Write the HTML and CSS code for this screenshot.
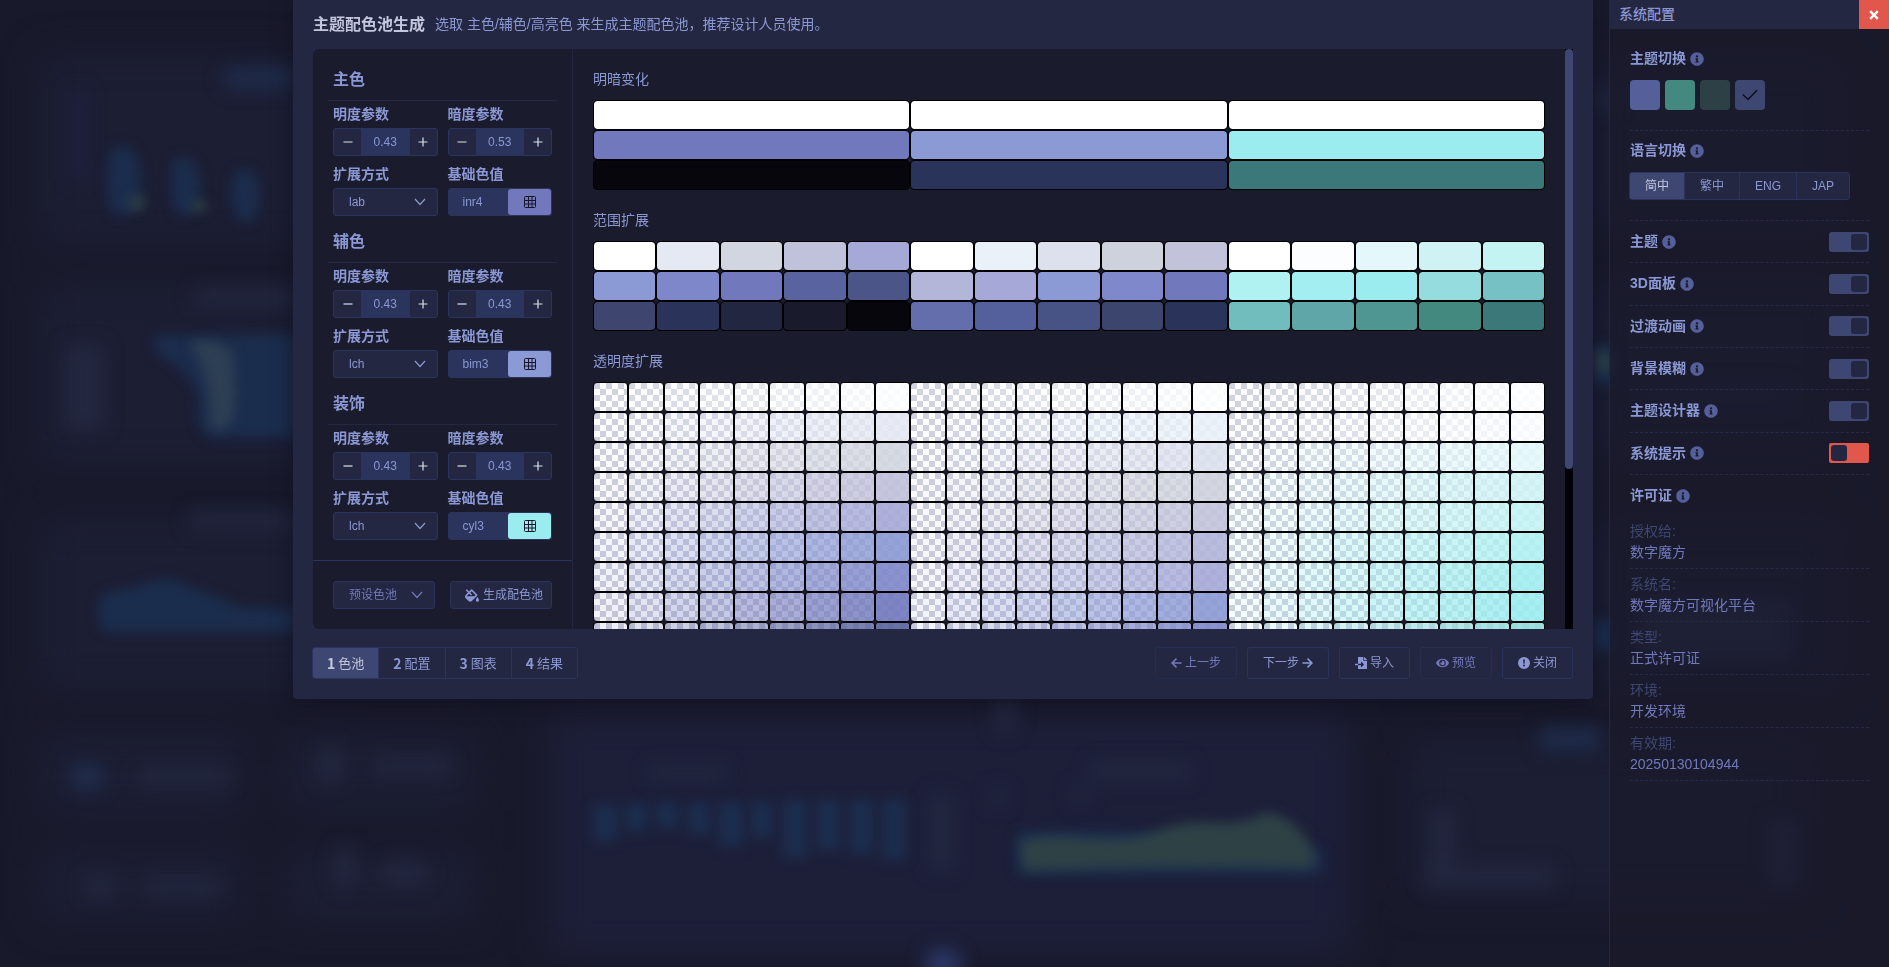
FILE: index.html
```html
<!DOCTYPE html>
<html lang="zh-CN">
<head>
<meta charset="utf-8">
<title>主题配色池生成</title>
<link rel="stylesheet" href="styles.css">
</head>
<body>

<svg class="sprite" aria-hidden="true">
  <symbol id="i-down" viewBox="0 0 12 12"><path d="M1 3l5 5.5L11 3" fill="none" stroke="currentColor" stroke-width="1.2"/></symbol>
  <symbol id="i-minus" viewBox="0 0 10 10"><path d="M.5 5h9" fill="none" stroke="currentColor" stroke-width="1.2"/></symbol>
  <symbol id="i-plus" viewBox="0 0 10 10"><path d="M.5 5h9M5 .5v9" fill="none" stroke="currentColor" stroke-width="1.2"/></symbol>
  <symbol id="i-grid" viewBox="0 0 12 12"><path d="M1.5.5h9a1 1 0 0 1 1 1v9a1 1 0 0 1-1 1h-9a1 1 0 0 1-1-1v-9a1 1 0 0 1 1-1zM.5 4.500h11M.5 8h11M4.500.5v11M8 .5v11" fill="none" stroke="currentColor"/></symbol>
  <symbol id="i-fill" viewBox="0 0 576 512"><path fill="currentColor" d="M512 320s-64 92.650-64 128c0 35.350 28.660 64 64 64s64-28.650 64-64-64-128-64-128zm-9.370-102.940L294.940 9.370C288.690 3.120 280.500 0 272.310 0s-16.380 3.120-22.620 9.370l-81.580 81.580L81.930 4.760c-6.250-6.250-16.380-6.250-22.620 0L36.690 27.380c-6.240 6.250-6.240 16.380 0 22.620l86.190 86.180-94.760 94.760c-37.490 37.480-37.490 98.260 0 135.750l117.190 117.190c18.740 18.740 43.310 28.120 67.870 28.120 24.570 0 49.130-9.370 67.870-28.120l221.570-221.570c12.500-12.500 12.500-32.750.01-45.250zm-116.220 70.970H65.930c1.360-3.840 3.570-7.980 7.430-11.830l13.150-13.150 81.610-81.610 58.600 58.600c12.490 12.490 32.750 12.490 45.240 0s12.490-32.750 0-45.240l-58.600-58.600 58.950-58.950 162.440 162.440-48.340 48.340z"/></symbol>
  <symbol id="i-left" viewBox="0 0 12 12"><path d="M11.500 6H1.500M6 1.200L1.200 6 6 10.800" fill="none" stroke="currentColor" stroke-width="1.700"/></symbol>
  <symbol id="i-right" viewBox="0 0 12 12"><path d="M.5 6h10M6 1.200L10.800 6 6 10.800" fill="none" stroke="currentColor" stroke-width="1.700"/></symbol>
  <symbol id="i-import" viewBox="0 0 512 512"><path fill="currentColor" d="M16 288c-8.800 0-16 7.200-16 16v32c0 8.800 7.200 16 16 16h112v-64zm489-183L407.100 7c-4.500-4.500-10.600-7-17-7H384v128h128v-6.100c0-6.300-2.500-12.400-7-16.900zm-153 31V0H152c-13.300 0-24 10.700-24 24v264h128v-65.200c0-14.300 17.300-21.400 27.400-11.300L379 308c6.600 6.700 6.600 17.400 0 24l-95.700 96.400c-10.100 10.100-27.400 3-27.400-11.300V352H128v136c0 13.300 10.700 24 24 24h336c13.300 0 24-10.700 24-24V160H376c-13.200 0-24-10.800-24-24z"/></symbol>
  <symbol id="i-eye" viewBox="0 0 576 512"><path fill="currentColor" d="M572.520 241.400C518.290 135.590 410.930 64 288 64S57.680 135.640 3.480 241.410a32.350 32.350 0 0 0 0 29.190C57.710 376.410 165.070 448 288 448s230.320-71.640 284.520-177.410a32.350 32.350 0 0 0 0-29.190zM288 400a144 144 0 1 1 144-144 143.930 143.930 0 0 1-144 144zm0-240a95.310 95.310 0 0 0-25.310 3.790 47.850 47.850 0 0 1-66.900 66.900A95.780 95.780 0 1 0 288 160z"/></symbol>
  <symbol id="i-alert" viewBox="0 0 12 12"><path fill="currentColor" fill-rule="evenodd" d="M6 0a6 6 0 1 1 0 12A6 6 0 0 1 6 0zM5.100 2.500l.3 4.200h1.200l.3-4.200zM6 7.600a1 1 0 1 0 0 2 1 1 0 0 0 0-2z"/></symbol>
  <symbol id="i-info" viewBox="0 0 512 512"><path fill="currentColor" d="M256 8C119.043 8 8 119.083 8 256c0 136.997 111.043 248 248 248s248-111.003 248-248C504 119.083 392.957 8 256 8zm0 110c23.196 0 42 18.804 42 42s-18.804 42-42 42-42-18.804-42-42 18.804-42 42-42zm56 254c0 6.627-5.373 12-12 12h-88c-6.627 0-12-5.373-12-12v-24c0-6.627 5.373-12 12-12h12v-64h-12c-6.627 0-12-5.373-12-12v-24c0-6.627 5.373-12 12-12h64c6.627 0 12 5.373 12 12v100h12c6.627 0 12 5.373 12 12v24z"/></symbol>
  <symbol id="i-check" viewBox="0 0 16 12"><path d="M.8 5.500L6 10.500 15.200 1" fill="none" stroke="currentColor" stroke-width="1.400"/></symbol>
  <symbol id="i-close" viewBox="0 0 10 10"><path d="M1.200 1.200l7.600 7.600M8.800 1.200L1.200 8.800" fill="none" stroke="currentColor" stroke-width="2.400"/></symbol>
</svg>

<svg class="backdrop" viewBox="0 0 1889 967" preserveAspectRatio="none" aria-hidden="true">
  <defs>
    <filter id="b-lg" x="-50%" y="-50%" width="200%" height="200%" color-interpolation-filters="sRGB"><feGaussianBlur stdDeviation="18"/></filter>
    <filter id="b-md" x="-50%" y="-100%" width="200%" height="300%" color-interpolation-filters="sRGB"><feGaussianBlur stdDeviation="9"/></filter>
    <filter id="b-sm" x="-50%" y="-50%" width="200%" height="200%" color-interpolation-filters="sRGB"><feGaussianBlur stdDeviation="6"/></filter>
  </defs>
  <g filter="url(#b-lg)" fill="#1c1e34">
    <rect x="40" y="55" width="300" height="190"/>
    <rect x="40" y="285" width="300" height="180"/>
    <rect x="40" y="520" width="300" height="170"/>
    <rect x="40" y="735" width="205" height="80"/>
    <rect x="40" y="850" width="205" height="70"/>
    <rect x="285" y="735" width="190" height="75"/>
    <rect x="285" y="850" width="190" height="70"/>
    <rect x="550" y="715" width="800" height="240" fill="#1d1f39"/>
    <rect x="1410" y="740" width="400" height="160"/>
    <rect x="1590" y="60" width="250" height="170"/>
    <rect x="1590" y="280" width="250" height="180"/>
    <rect x="1590" y="520" width="250" height="170"/>
  </g>
  <g filter="url(#b-md)" fill="#23273f">
    <rect x="225" y="68" width="70" height="20" fill="#1f2d4c"/>
    <rect x="195" y="288" width="100" height="18"/>
    <rect x="190" y="512" width="105" height="18"/>
    <rect x="65" y="345" width="38" height="85"/>
    <rect x="70" y="90" width="16" height="90" fill="#1f203d"/>
    <ellipse cx="87" cy="777" rx="18" ry="14" fill="#1f2d4c"/>
    <rect x="140" y="768" width="90" height="18"/>
    <rect x="85" y="876" width="30" height="22"/>
    <rect x="145" y="878" width="75" height="18"/>
    <ellipse cx="330" cy="765" rx="14" ry="20"/>
    <rect x="375" y="757" width="75" height="18"/>
    <ellipse cx="345" cy="868" rx="12" ry="22"/>
    <ellipse cx="404" cy="873" rx="26" ry="13"/>
    <rect x="650" y="765" width="75" height="16"/>
    <rect x="1090" y="762" width="100" height="18"/>
    <rect x="1540" y="728" width="60" height="22" fill="#1f2d4c"/>
    <ellipse cx="1005" cy="714" rx="12" ry="20"/>
    <ellipse cx="943" cy="964" rx="20" ry="16" fill="#2b3765"/>
    <rect x="930" y="795" width="22" height="75"/>
    <rect x="1425" y="866" width="130" height="22"/>
    <rect x="1430" y="810" width="24" height="60"/>
    <ellipse cx="998" cy="797" rx="9" ry="9"/>
    <ellipse cx="1080" cy="795" rx="9" ry="9"/>
    <rect x="1770" y="820" width="26" height="66" fill="#2b3050"/>
    <rect x="1640" y="600" width="150" height="60" fill="#282f50"/>
    <rect x="1640" y="385" width="150" height="20" fill="#20243f"/>
    <rect x="1595" y="90" width="20" height="20"/>
  </g>
  <g filter="url(#b-sm)" fill="#1b2d4d">
    <path d="M112 150q14-8 24 6q10 25 0 50q-10 16-24 6q-10-30 0-62zM174 160q14-6 22 6q8 24 0 42q-10 14-20 4q-8-28-2-52zM236 172q14-6 20 6q6 24-2 40q-10 8-18-2q-8-22 0-44z"/>
    <path d="M155 336l140-2v104h-84q-18-10-12-36q-4-30-44-50z"/>
    <path d="M103 594q30-6 62-16q40 14 76 30l54 2v22H105q-12-18-2-38z"/>
    <path d="M593 805h24v36h-24zM625 803h22v28h-22zM656 802h22v26h-22zM688 802h22v32h-22zM719 802h24v44h-24zM751 802h22v36h-22zM783 800h24v58h-24zM816 800h24v50h-24zM849 800h24v54h-24zM882 800h24v60h-24z"/>
    <path d="M1017 832l80-2 170 10 56 10v24H1017z"/>
    <path d="M1592 345h20v40h-20zM1592 620h20v30h-20z"/>
  </g>
  <g filter="url(#b-sm)" fill="#2e4246">
    <ellipse cx="137" cy="203" rx="9" ry="7"/>
    <ellipse cx="199" cy="206" rx="8" ry="6"/>
    <path fill="#2d3f53" d="M190 342q30-4 42 10q6 45 0 70q-12 12-22 4q2-50-20-84z"/>
    <path d="M1020 842q25-8 60-4q40 6 76-6q20-10 50-10q40 4 60-10q26 4 44 32q8 24-2 24q-100-4-284 2z"/>
    <ellipse cx="1603" cy="362" rx="8" ry="12"/>
  </g>
</svg>

<main class="dialog" role="dialog" aria-labelledby="dialog-title">
  <header class="dialog-head">
    <h1 id="dialog-title">主题配色池生成</h1>
    <p>选取 主色/辅色/高亮色 来生成主题配色池，推荐设计人员使用。</p>
  </header>

  <div class="workspace">
    <form class="params" id="params">
      <div class="groups">
        <section class="group">
          <h2>主色</h2>
          <div class="fields">
            <div class="field"><label for="l1">明度参数</label><div class="stepper"><button type="button" aria-label="减少"><svg><use href="#i-minus"/></svg></button><input id="l1" value="0.43"><button type="button" aria-label="增加"><svg><use href="#i-plus"/></svg></button></div></div>
            <div class="field"><label for="d1">暗度参数</label><div class="stepper"><button type="button" aria-label="减少"><svg><use href="#i-minus"/></svg></button><input id="d1" value="0.53"><button type="button" aria-label="增加"><svg><use href="#i-plus"/></svg></button></div></div>
            <div class="field"><label for="m1">扩展方式</label><div class="select"><select id="m1"><option>lab</option><option>lch</option></select><svg><use href="#i-down"/></svg></div></div>
            <div class="field"><label for="c1">基础色值</label><div class="picker picker-inr"><input id="c1" value="inr4"><button type="button" aria-label="选择颜色"><svg><use href="#i-grid"/></svg></button></div></div>
          </div>
        </section>
        <section class="group">
          <h2>辅色</h2>
          <div class="fields">
            <div class="field"><label for="l2">明度参数</label><div class="stepper"><button type="button" aria-label="减少"><svg><use href="#i-minus"/></svg></button><input id="l2" value="0.43"><button type="button" aria-label="增加"><svg><use href="#i-plus"/></svg></button></div></div>
            <div class="field"><label for="d2">暗度参数</label><div class="stepper"><button type="button" aria-label="减少"><svg><use href="#i-minus"/></svg></button><input id="d2" value="0.43"><button type="button" aria-label="增加"><svg><use href="#i-plus"/></svg></button></div></div>
            <div class="field"><label for="m2">扩展方式</label><div class="select"><select id="m2"><option>lch</option><option>lab</option></select><svg><use href="#i-down"/></svg></div></div>
            <div class="field"><label for="c2">基础色值</label><div class="picker picker-bim"><input id="c2" value="bim3"><button type="button" aria-label="选择颜色"><svg><use href="#i-grid"/></svg></button></div></div>
          </div>
        </section>
        <section class="group">
          <h2>装饰</h2>
          <div class="fields">
            <div class="field"><label for="l3">明度参数</label><div class="stepper"><button type="button" aria-label="减少"><svg><use href="#i-minus"/></svg></button><input id="l3" value="0.43"><button type="button" aria-label="增加"><svg><use href="#i-plus"/></svg></button></div></div>
            <div class="field"><label for="d3">暗度参数</label><div class="stepper"><button type="button" aria-label="减少"><svg><use href="#i-minus"/></svg></button><input id="d3" value="0.43"><button type="button" aria-label="增加"><svg><use href="#i-plus"/></svg></button></div></div>
            <div class="field"><label for="m3">扩展方式</label><div class="select"><select id="m3"><option>lch</option><option>lab</option></select><svg><use href="#i-down"/></svg></div></div>
            <div class="field"><label for="c3">基础色值</label><div class="picker picker-cyl"><input id="c3" value="cyl3"><button type="button" aria-label="选择颜色"><svg><use href="#i-grid"/></svg></button></div></div>
          </div>
        </section>
      </div>
      <div class="params-foot">
        <div class="select select-preset"><select aria-label="预设色池"><option>预设色池</option></select><svg><use href="#i-down"/></svg></div>
        <button type="button" class="generate"><svg><use href="#i-fill"/></svg>生成配色池</button>
      </div>
    </form>

    <div class="preview">
      <div class="preview-body">
        <section><h3>明暗变化</h3><div class="pool pool-3" id="pool-tone"></div></section>
        <section><h3>范围扩展</h3><div class="pool pool-15" id="pool-range"></div></section>
        <section><h3>透明度扩展</h3><div class="pool pool-27" id="pool-alpha"></div></section>
      </div>
      <div class="scroll-track"><div class="scroll-thumb"></div></div>
    </div>
  </div>

  <footer class="dialog-foot">
    <nav class="steps">
      <button class="active"><b>1</b> 色池</button><button><b>2</b> 配置</button><button><b>3</b> 图表</button><button><b>4</b> 结果</button>
    </nav>
    <div class="actions">
      <button disabled><svg class="arrow"><use href="#i-left"/></svg>上一步</button>
      <button>下一步<svg class="arrow"><use href="#i-right"/></svg></button>
      <button><svg><use href="#i-import"/></svg>导入</button>
      <button disabled><svg class="eye"><use href="#i-eye"/></svg>预览</button>
      <button><svg><use href="#i-alert"/></svg>关闭</button>
    </div>
  </footer>
</main>

<aside class="settings">
  <header class="settings-head">
    <h2>系统配置</h2>
    <button class="close" aria-label="关闭"><svg><use href="#i-close"/></svg></button>
  </header>
  <div class="settings-body">
    <section class="block block-theme">
      <h3>主题切换<svg class="info"><use href="#i-info"/></svg></h3>
      <div class="themes">
        <button class="t-indigo" aria-label="靛蓝"></button>
        <button class="t-teal" aria-label="青绿"></button>
        <button class="t-forest" aria-label="墨绿"></button>
        <button class="t-slate" aria-label="灰蓝"><svg><use href="#i-check"/></svg></button>
      </div>
    </section>
    <section class="block">
      <h3>语言切换<svg class="info"><use href="#i-info"/></svg></h3>
      <div class="langs"><button class="active">简中</button><button>繁中</button><button>ENG</button><button>JAP</button></div>
    </section>
    <div class="switches">
      <div class="toggle"><label for="s1">主题</label><svg class="info"><use href="#i-info"/></svg><input type="checkbox" id="s1" checked></div>
      <div class="toggle"><label for="s2">3D面板</label><svg class="info"><use href="#i-info"/></svg><input type="checkbox" id="s2" checked></div>
      <div class="toggle"><label for="s3">过渡动画</label><svg class="info"><use href="#i-info"/></svg><input type="checkbox" id="s3" checked></div>
      <div class="toggle"><label for="s4">背景模糊</label><svg class="info"><use href="#i-info"/></svg><input type="checkbox" id="s4" checked></div>
      <div class="toggle"><label for="s5">主题设计器</label><svg class="info"><use href="#i-info"/></svg><input type="checkbox" id="s5" checked></div>
      <div class="toggle"><label for="s6">系统提示</label><svg class="info"><use href="#i-info"/></svg><input type="checkbox" id="s6"></div>
    </div>
    <h3 class="license-title">许可证<svg class="info"><use href="#i-info"/></svg></h3>
    <dl class="license">
      <div><dt>授权给:</dt><dd>数字魔方</dd></div>
      <div><dt>系统名:</dt><dd>数字魔方可视化平台</dd></div>
      <div><dt>类型:</dt><dd>正式许可证</dd></div>
      <div><dt>环境:</dt><dd>开发环境</dd></div>
      <div><dt>有效期:</dt><dd>20250130104944</dd></div>
    </dl>
  </div>
</aside>

<script src="pools.js"></script>
</body>
</html>
```
FILE: styles.css
```css
:root {
  --base: #1a1b2d;
  --surface: #242741;
  --line: #2a345c;
  --active: #3e4772;
  --muted: #55609b;
  --value: #7178bc;
  --text: #8b98d4;
  --bright: #c4c6dd;
  --red: #e1574b;
}

* { box-sizing: border-box; }

body {
  margin: 0;
  height: 100vh;
  overflow: hidden;
  display: grid;
  grid-template-columns: minmax(0, 1fr) 280px;
  background: #18192a;
  color: var(--text);
  font: 14px/21px "Liberation Sans", "Noto Sans CJK SC", sans-serif;
}

h1, h2, h3, p, dl, dd { margin: 0; }

button, input, select { font: inherit; color: inherit; margin: 0; padding: 0; border: 0; background: none; }
button { display: flex; align-items: center; justify-content: center; }
svg { flex: none; width: 12px; height: 12px; }

.sprite { position: absolute; width: 0; height: 0; }
.backdrop { position: fixed; inset: 0; width: 100%; height: 100%; }

/* Dialog */
.dialog {
  position: relative;
  align-self: start;
  justify-self: end;
  width: calc(100% - 309px);
  margin-right: 16px;
  padding: 0 20px 20px;
  background: var(--surface);
  border-radius: 0 0 4px 4px;
  box-shadow: 0 4px 20px rgba(10, 10, 24, .5);
}
.dialog-head { display: flex; align-items: center; gap: 10px; height: 49px; }
.dialog-head h1 { font-size: 16px; font-weight: 700; color: var(--bright); }

.workspace { display: flex; height: 580px; border-radius: 6px 0 0 6px; overflow: hidden; background: var(--base); }

.params { flex: none; width: 260px; display: flex; flex-direction: column; border-right: 1px solid var(--surface); }
.groups { padding: 5px 15px 20px; }
.group h2 { padding: 15px 5px 10px; border-bottom: 1px solid var(--surface); font-size: 16px; font-weight: 700; line-height: 21px; }
.fields { display: grid; grid-template-columns: 1fr 1fr; gap: 5px 10px; padding: 0 5px; }
.field label { display: block; font-weight: 700; line-height: 27px; }
.field { font-size: 14px; min-width: 0; }

.stepper, .picker, .select, .generate {
  height: 28px;
  border: 1px solid var(--line);
  border-radius: 3px;
  background: var(--surface);
  font-size: 12px;
}
.stepper { display: flex; }
.stepper button { width: 27px; color: #dfe1ec; }
.stepper svg { width: 10px; height: 10px; }
.stepper input { flex: 1; min-width: 0; text-align: center; background: var(--line); }

.select { display: grid; align-items: center; }
.select select, .select svg { grid-area: 1 / 1; }
.select select { appearance: none; height: 26px; padding: 0 15px; }
.select option { background: var(--surface); }
.select svg { justify-self: end; margin-right: 11px; pointer-events: none; }

.picker { display: flex; background: var(--line); }
.picker input { flex: 1; min-width: 0; padding-left: 14px; }
.picker button { width: 43px; border-radius: 3px; color: #15162a; }
.picker-inr button { background: #7178bc; }
.picker-bim button { background: #8b99d5; }
.picker-cyl button { background: #9becef; }

.params-foot { flex: 1; display: grid; grid-template-columns: 1fr 1fr; gap: 15px; align-items: center; padding: 0 20px; border-top: 1px solid var(--line); }
.select-preset { color: var(--value); }
.generate { justify-content: flex-start; gap: 4px; padding-left: 14px; white-space: nowrap; }
.generate svg { width: 14px; height: 13px; }

.preview { flex: 1; min-width: 0; display: flex; }
.preview-body { flex: 1; min-width: 0; padding: 0 20px; overflow: hidden; }
.preview h3 { padding: 20px 0 10px; font-size: 14px; font-weight: 400; line-height: 21px; }
.scroll-track { flex: none; width: 8px; background: #020207; }
.scroll-thumb { height: 420px; border-radius: 4px; background: var(--active); }

.pool { display: grid; grid-auto-rows: 30px; }
.pool-3 { grid-template-columns: repeat(3, 1fr); }
.pool-15 { grid-template-columns: repeat(15, 1fr); }
.pool-27 { grid-template-columns: repeat(27, 1fr); }
.swatch { border: 1px solid #000; border-radius: 4px; background-clip: padding-box; }
.checker { background: repeating-conic-gradient(#fff 0 25%, #cccfdb 0 50%) 0 0 / 12px 12px; }
.checker span { display: block; height: 100%; border-radius: 3px; }

.dialog-foot { display: flex; justify-content: space-between; padding-top: 18px; font-size: 12px; }
.steps { display: flex; margin-left: -1px; border: 1px solid var(--line); border-radius: 3px; overflow: hidden; font-size: 13px; }
.steps button { height: 30px; padding: 0 14px; gap: 3px; border-right: 1px solid var(--line); }
.steps button:last-child { border-right: 0; }
.steps b { font-family: "Noto Sans CJK SC", sans-serif; font-size: 14px; font-weight: 700; }
.steps .active, .langs .active { background: var(--active); color: var(--bright); }
.actions { display: flex; gap: 10px; }
.actions button { height: 32px; padding: 0 15px; gap: 3px; border: 1px solid var(--line); border-radius: 3px; }
.actions button:disabled { color: var(--value); border-style: dotted; }
.actions .eye { width: 13px; }
.actions .arrow { width: 11px; }

/* Settings */
.settings { position: relative; min-height: 100vh; border-left: 1px solid #242741; background: rgba(25, 26, 43, .7); }
.settings-head { display: flex; justify-content: space-between; height: 29px; background: var(--surface); }
.settings-head h2 { padding-left: 9px; font-size: 14px; font-weight: 500; line-height: 29px; }
.close { width: 30px; background: var(--red); color: #fff; }
.close svg { width: 10px; height: 10px; }
.settings-body { padding: 0 20px; }
.settings-body h3 { display: flex; align-items: center; gap: 4px; font-size: 14px; font-weight: 700; line-height: 21px; }
.info { width: 14px; height: 14px; color: var(--muted); }

.block { padding: 9px 0 20px; border-bottom: 1px dashed #262a46; }
.block h3 { margin-bottom: 11px; }
.block-theme { padding-top: 19px; }
.themes { display: flex; gap: 5px; }
.themes button { width: 30px; height: 30px; border-radius: 4px; color: #0d0e1c; }
.themes svg { width: 16px; height: 12px; }
.t-indigo { background: #55609b; }
.t-teal { background: #438980; }
.t-forest { background: #2d4045; }
.t-slate { background: #3e4772; }

.langs { display: flex; width: fit-content; margin-left: -1px; border: 1px solid var(--line); border-radius: 3px; background: var(--surface); overflow: hidden; font-size: 12px; }
.langs button { height: 26px; padding: 0 15px; border-right: 1px solid var(--line); }
.langs button:last-child { border-right: 0; }

.switches { display: grid; grid-auto-rows: 1fr; min-height: 254px; }
.toggle { display: flex; align-items: center; gap: 4px; border-bottom: 1px dashed #262a46; }
.toggle label { font-weight: 700; }
.toggle input { appearance: none; display: flex; width: 40px; height: 20px; margin-left: auto; padding: 2px; border-radius: 2px; background: var(--red); }
.toggle input::before { content: ""; width: 16px; border-radius: 3px; background: var(--surface); }
.toggle input:checked { justify-content: flex-end; border-radius: 3px; background: var(--active); }

.license-title { height: 41px; }
.license div { padding: 5px 0; border-bottom: 1px dashed #262a46; }
.license dt { color: var(--active); }
.license dd { color: var(--value); }
```
FILE: pools.js
```js
// Each pool column is a 15-step scale running from light to dark.
const scales = [
  ['#ffffff', '#e5e9f4', '#d2d6e0', '#c0c1da', '#a6a9d7', '#8b99d5', '#7e87c9', '#7178bc', '#59639f', '#4b5588', '#3e4670', '#2a335a', '#232640', '#191a2b', '#06060c'],
  ['#ffffff', '#eaf1f9', '#dde1ee', '#ced2dd', '#c2c3da', '#b3b5d9', '#a6a9d7', '#8b99d5', '#7e88ca', '#7178bc', '#656eac', '#54609b', '#485385', '#3c456d', '#2a335a'],
  ['#ffffff', '#fbfdff', '#e4f8fb', '#cff3f5', '#c4f3f4', '#b0f1f2', '#a2eef0', '#9becef', '#94dcdd', '#75c1c4', '#71bcbd', '#5ea6a7', '#4f9693', '#438980', '#3b787a'],
];

function swatch(pool, color, alpha) {
  const cell = document.createElement('div');
  cell.className = 'swatch';
  if (alpha === undefined) {
    cell.style.backgroundColor = color;
  } else {
    const tint = document.createElement('span');
    tint.style.backgroundColor = color;
    tint.style.opacity = alpha;
    cell.classList.add('checker');
    cell.append(tint);
  }
  pool.append(cell);
}

const tone = document.getElementById('pool-tone');
[0, 7, 14].forEach((step) => scales.forEach((s) => swatch(tone, s[step])));

const range = document.getElementById('pool-range');
for (let row = 0; row < 3; row++) {
  scales.forEach((s) => s.slice(row * 5, row * 5 + 5).forEach((c) => swatch(range, c)));
}

const alphaPool = document.getElementById('pool-alpha');
for (let row = 0; row < 15; row++) {
  scales.forEach((s) => {
    for (let a = 1; a <= 9; a++) swatch(alphaPool, s[row], a / 10);
  });
}
```
